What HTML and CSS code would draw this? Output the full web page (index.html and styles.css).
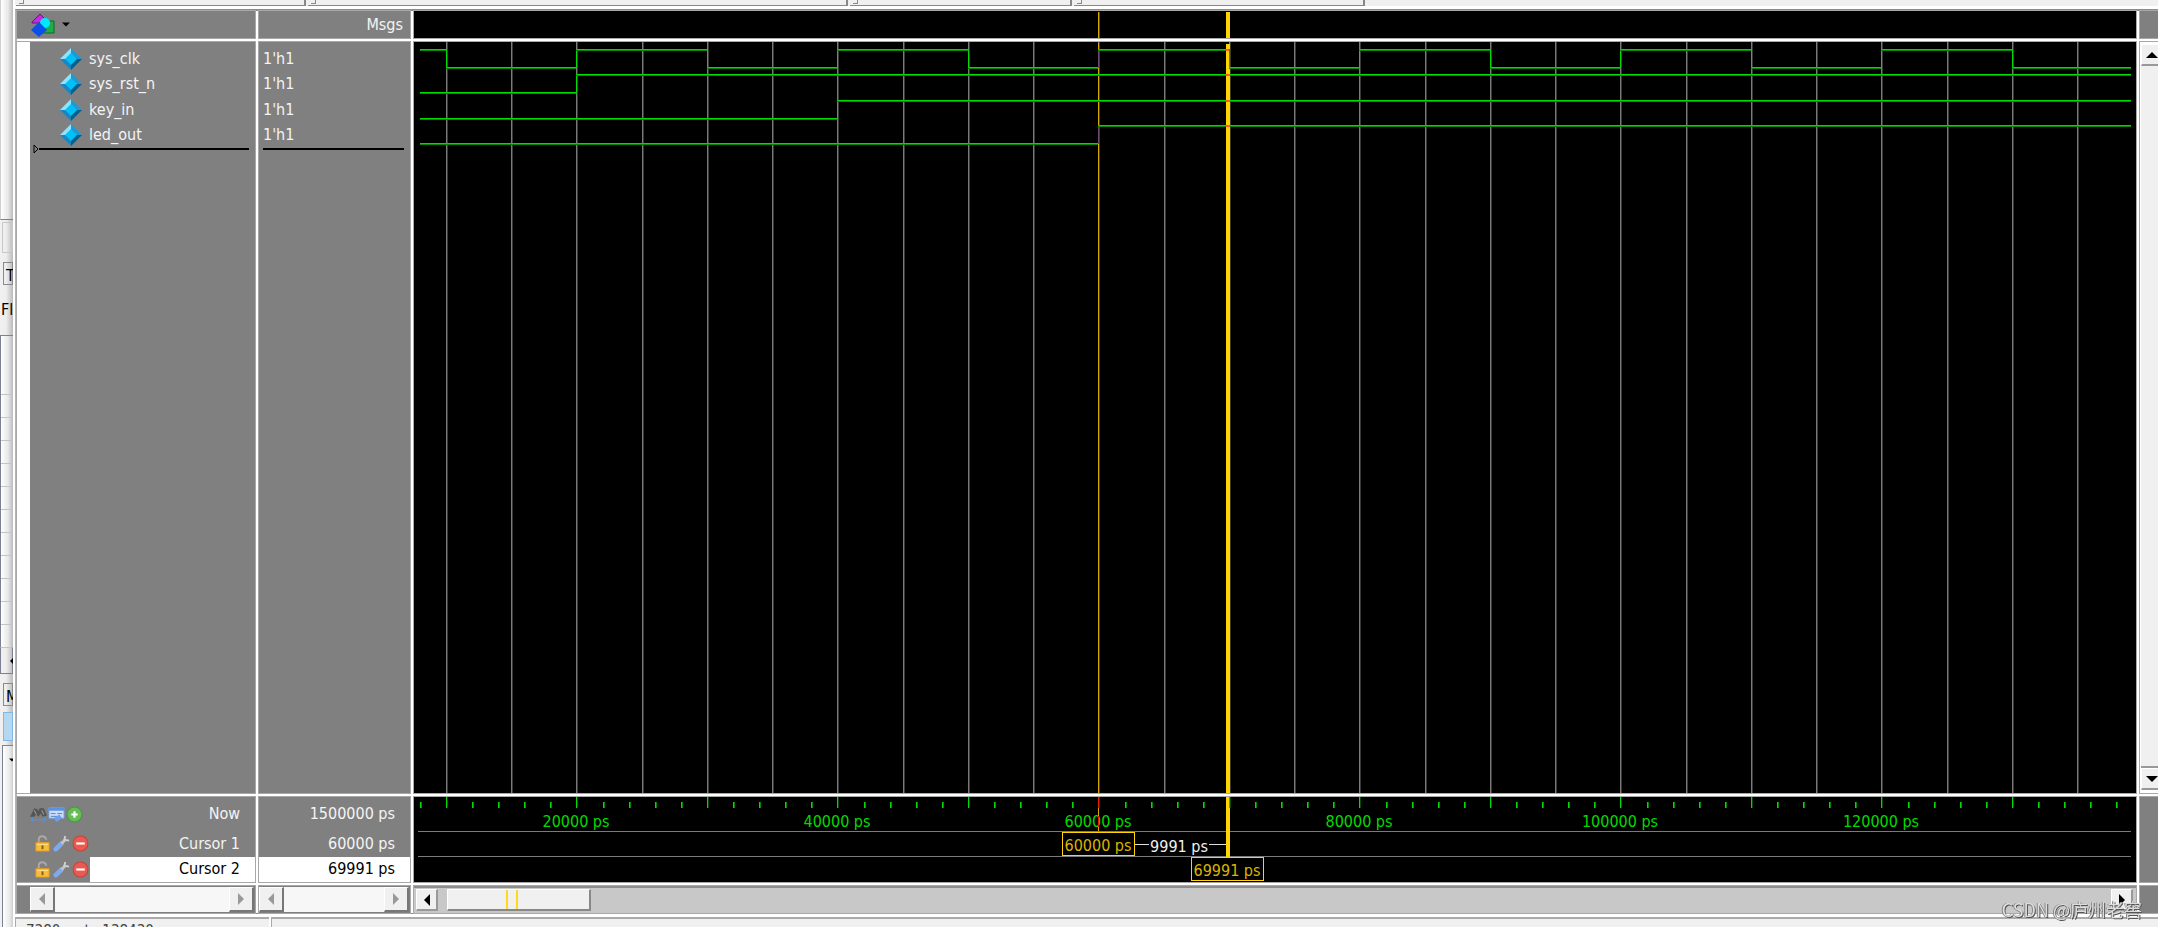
FILE: index.html
```html
<!DOCTYPE html>
<html lang="en">
<head>
  <meta charset="UTF-8">
  <meta name="viewport" content="width=device-width, initial-scale=1.0">
  <title>Wave</title>
  <link rel="stylesheet" href="styles.css">
</head>
<body>
  <!-- icon sprite -->
  <svg class="sprite" aria-hidden="true">
    <symbol id="i-signal" viewBox="0 0 22 22">
      <path d="M11 0L0 11L11 11Z" fill="#8fe3fb"/>
      <path d="M11 0L22 11L11 11Z" fill="#1c9ad6"/>
      <path d="M0 11L11 22L11 11Z" fill="#1686c4"/>
      <path d="M22 11L11 22L11 11Z" fill="#045f8c"/>
      <path d="M11 5L17 11L11 17L5 11Z" fill="#00c0f8"/>
    </symbol>
    <symbol id="i-objects" viewBox="0 0 24 24">
      <path d="M1 9L9 1L14 6V10H1Z" fill="#c42be0" stroke="#6d1080"/>
      <path d="M12 8H23V20H12Z" fill="#1fae45" stroke="#0c6b2a"/>
      <circle cx="14" cy="10" r="5" fill="#00e8ff"/>
      <path d="M8 9L16 17L8 24L0 17Z" fill="#0a50e6"/>
    </symbol>
    <symbol id="i-find" viewBox="0 0 16 16">
      <path d="M0 10L4 2L7 3L8 5L9 2L13 2L16 9L12 10L10 7L8 10L6 8L4 10Z" fill="#555"/>
      <path d="M4 4L6 8M11 4L13 8" stroke="#999" fill="none"/>
      <path d="M1 13H15M3 11L1 13L3 15M13 11L15 13L13 15" stroke="#4b93ea" fill="none"/>
    </symbol>
    <symbol id="i-edit" viewBox="0 0 18 16">
      <path d="M1 1H17V12H1Z" fill="#c9dcf8" stroke="#6f9fe8"/>
      <path d="M1 1H17V4H1Z" fill="#5b90e4"/>
      <path d="M3 7H8M10 7H15M3 10H10" stroke="#5c7fb8"/>
      <path d="M6 12L12 8L15 12L9 16Z" fill="#6f9fe8"/>
    </symbol>
    <symbol id="i-add" viewBox="0 0 16 16">
      <circle cx="8" cy="8" r="7" fill="#67bd55" stroke="#449b3c"/>
      <path d="M8 5V11M5 8H11" stroke="#fff" stroke-width="2"/>
    </symbol>
    <symbol id="i-lock" viewBox="0 0 16 18">
      <path d="M4 8V5C4 0 11 0 12 5" fill="none" stroke="#a9a9a9" stroke-width="2"/>
      <path d="M1 8H15V17H1Z" fill="#f6bd3c" stroke="#dd9a25"/>
      <path d="M2 10H14" stroke="#ffe08a"/>
      <path d="M8 11V15" stroke="#8a5a10" stroke-width="2"/>
    </symbol>
    <symbol id="i-wrench" viewBox="0 0 18 18">
      <path d="M3 15L9 9" stroke="#7fa9ee" stroke-width="5" stroke-linecap="round"/>
      <path d="M9 9L13 5" stroke="#c4c4c4" stroke-width="3"/>
      <path d="M13 1L12 5L17 6" fill="none" stroke="#cfcfcf" stroke-width="2"/>
    </symbol>
    <symbol id="i-remove" viewBox="0 0 16 16">
      <circle cx="8" cy="8" r="7" fill="#ea5a50" stroke="#c94038"/>
      <path d="M4 8H12" stroke="#fff" stroke-width="2"/>
    </symbol>
    <symbol id="i-left" viewBox="0 0 6 12"><path d="M6 0V12L0 6Z" fill="currentColor"/></symbol>
    <symbol id="i-right" viewBox="0 0 6 12"><path d="M0 0V12L6 6Z" fill="currentColor"/></symbol>
    <symbol id="i-up" viewBox="0 0 12 6"><path d="M0 6H12L6 0Z" fill="currentColor"/></symbol>
    <symbol id="i-down" viewBox="0 0 12 6"><path d="M0 0H12L6 6Z" fill="currentColor"/></symbol>
  </svg>

  <div class="app">
    <!-- panels hidden behind the wave window -->
    <aside class="dock">
      <div class="dock-box dock-top"></div>
      <div class="dock-button"></div>
      <div class="dock-field">T</div>
      <div class="dock-label">Fl</div>
      <div class="dock-list"></div>
      <div class="dock-scroll"><svg class="dock-arrow"><use href="#i-left"/></svg></div>
      <div class="dock-field dock-field-m">M</div>
      <div class="dock-selected"></div>
      <div class="dock-box dock-tree"><svg class="dock-arrow"><use href="#i-down"/></svg></div>
    </aside>

    <main class="window">
      <div class="toolbars">
        <div class="toolbar toolbar-a"></div>
        <div class="toolbar toolbar-b"></div>
        <div class="toolbar toolbar-c"></div>
        <div class="toolbar toolbar-d"></div>
      </div>

      <div class="wave">
        <div class="cell head">
          <button class="menu" aria-label="Objects">
            <svg class="menu-icon"><use href="#i-objects"/></svg>
            <svg class="menu-arrow"><use href="#i-down"/></svg>
          </button>
        </div>
        <div class="cell head head-msgs">Msgs</div>
        <div class="cell black"><svg class="plot" id="header"></svg></div>
        <div class="cell head"></div>

        <div class="cell names">
          <ul class="signals">
            <li><svg class="signal-icon"><use href="#i-signal"/></svg>sys_clk</li>
            <li><svg class="signal-icon"><use href="#i-signal"/></svg>sys_rst_n</li>
            <li><svg class="signal-icon"><use href="#i-signal"/></svg>key_in</li>
            <li><svg class="signal-icon"><use href="#i-signal"/></svg>led_out</li>
          </ul>
          <div class="insert"><svg class="insert-mark" viewBox="0 0 6 10"><path d="M1 1V9L5 5Z" fill="none" stroke="#000"/></svg></div>
        </div>
        <div class="cell values">
          <ul class="signals">
            <li>1'h1</li>
            <li>1'h1</li>
            <li>1'h1</li>
            <li>1'h1</li>
          </ul>
          <div class="insert"></div>
        </div>
        <div class="cell black"><svg class="plot" id="traces"></svg></div>
        <div class="cell vscroll">
          <button class="scroll-button" aria-label="Scroll up"><svg class="arrow-v"><use href="#i-up"/></svg></button>
          <div class="vtrack"></div>
          <button class="scroll-button" aria-label="Scroll down"><svg class="arrow-v"><use href="#i-down"/></svg></button>
        </div>

        <div class="cell cursors">
          <div class="cursor-row">
            <div class="tools">
              <button aria-label="Find"><svg><use href="#i-find"/></svg></button>
              <button aria-label="Edit"><svg><use href="#i-edit"/></svg></button>
              <button aria-label="Add cursor"><svg><use href="#i-add"/></svg></button>
            </div>
            <span class="cursor-name">Now</span>
          </div>
          <div class="cursor-row">
            <div class="tools tools-cursor">
              <button aria-label="Lock cursor 1"><svg><use href="#i-lock"/></svg></button>
              <button aria-label="Edit cursor 1"><svg><use href="#i-wrench"/></svg></button>
              <button aria-label="Remove cursor 1"><svg><use href="#i-remove"/></svg></button>
            </div>
            <span class="cursor-name">Cursor 1</span>
          </div>
          <div class="cursor-row">
            <div class="tools tools-cursor">
              <button aria-label="Lock cursor 2"><svg><use href="#i-lock"/></svg></button>
              <button aria-label="Edit cursor 2"><svg><use href="#i-wrench"/></svg></button>
              <button aria-label="Remove cursor 2"><svg><use href="#i-remove"/></svg></button>
            </div>
            <span class="cursor-name active">Cursor 2</span>
          </div>
        </div>
        <div class="cell cursors">
          <div class="cursor-row"><span class="cursor-name">1500000 ps</span></div>
          <div class="cursor-row"><span class="cursor-name">60000 ps</span></div>
          <div class="cursor-row"><span class="cursor-name active">69991 ps</span></div>
        </div>
        <div class="cell black"><svg class="plot" id="ruler"></svg></div>
        <div class="cell head"></div>

        <div class="cell hscroll hscroll-names">
          <button class="scroll-button" aria-label="Scroll names left" disabled><svg class="arrow-h"><use href="#i-left"/></svg></button>
          <div class="htrack"></div>
          <button class="scroll-button" aria-label="Scroll names right" disabled><svg class="arrow-h"><use href="#i-right"/></svg></button>
        </div>
        <div class="cell hscroll">
          <button class="scroll-button" aria-label="Scroll values left" disabled><svg class="arrow-h"><use href="#i-left"/></svg></button>
          <div class="htrack"></div>
          <button class="scroll-button" aria-label="Scroll values right" disabled><svg class="arrow-h"><use href="#i-right"/></svg></button>
        </div>
        <div class="cell hscroll hscroll-wave">
          <button class="scroll-button" aria-label="Scroll wave left"><svg class="arrow-h"><use href="#i-left"/></svg></button>
          <input class="range" type="range" min="0" max="1500" value="9" aria-label="Time">
          <button class="scroll-button" aria-label="Scroll wave right"><svg class="arrow-h"><use href="#i-right"/></svg></button>
        </div>
        <div class="cell head"></div>
      </div>

      <footer class="status">
        <div class="status-range">7380 ps to 138430</div>
        <div class="status-rest"></div>
      </footer>
    </main>
  </div>

  <div class="watermark">CSDN @庐州老窖</div>

  <script src="wave.js"></script>
</body>
</html>
```

FILE: styles.css
```css
* { margin: 0; padding: 0; box-sizing: border-box; }
body {
  background: #f0f0f0; color: #f4f4f4; overflow: hidden;
  font-family: 'DejaVu Sans Condensed', 'Noto Sans', sans-serif; font-size: 16px; line-height: 20px;
}
button { border: none; background: none; color: inherit; font: inherit; }
svg { display: block; }
.sprite { position: absolute; width: 0; height: 0; }

.app { display: flex; height: 100vh; }

/* left dock */
.dock {
  width: 13px; flex: none; overflow: hidden; color: #000; display: flex; flex-direction: column;
  background: linear-gradient(90deg, #f0f0f0 1px, #eee 6px, #bbb 13px);
}
.dock-box, .dock-list { border-left: 1px solid #7c8090; background: linear-gradient(90deg, #fff, #e8e8e8 7px, #bbb 12px); }
.dock-top { height: 220px; border-left-color: #d0d0d0; border-bottom: 1px solid #7c8090; }
.dock-button { height: 31px; margin: 2px 0 0 2px; border: 1px solid #c8c8c8; flex: none; }
.dock-field { height: 23px; margin: 9px 0 0 3px; padding-left: 2px; border: 1px solid #8a8a8a; line-height: 26px; flex: none; }
.dock-label { height: 50px; padding: 15px 0 0 1px; flex: none; }
.dock-list {
  height: 312px; border-top: 1px solid #7c8090;
  background: repeating-linear-gradient(transparent 0 22px, #c4c4c4 22px 23px) 0 36px no-repeat, linear-gradient(90deg, #fff, #e8e8e8 7px, #bbb 12px);
}
.dock-scroll { height: 27px; padding: 9px 0 0 8px; border: 1px solid #7c8090; border-top-color: #c4c4c4; flex: none; }
.dock-arrow { width: 6px; height: 8px; }
.dock-field-m { margin-top: 9px; }
.dock-selected { height: 29px; margin: 6px 0 4px 3px; background: #b5d7f0; border: 1px solid #7cb8e8; flex: none; }
.dock-tree { flex: 1; margin-left: 2px; padding: 10px 0 0 6px; border-top: 1px solid #7c8090; }

/* wave window */
.window { flex: 1; min-width: 0; display: flex; flex-direction: column; background: #fff; border-left: 2px solid #fff; }
.toolbars { height: 7px; display: flex; gap: 2px; background: #f0f0f0; border-bottom: 1px solid #fff; flex: none; padding-left: 1px; }
.toolbar { height: 6px; border-right: 2px solid #888; border-bottom: 1px solid #888; }
.toolbar::before { content: ""; display: block; width: 4px; height: 3px; margin-left: 3px; border-right: 1px solid #888; border-bottom: 1px solid #888; }
.toolbar-a { width: 290px; }
.toolbar-b { width: 540px; }
.toolbar-c { width: 222px; }
.toolbar-d { width: 291px; }

.wave {
  flex: 1; min-height: 0; margin-top: 2px;
  border-top: 2px solid #8c8c8c; border-left: 2px solid #b4b4b4; border-bottom: 1px solid #8c8c8c;
  display: grid; gap: 4px;
  grid-template-columns: 238px 151px 1fr 18px;
  grid-template-rows: 27px 1fr 85px 27px;
}
.cell { background: #808080; box-shadow: 0 0 0 1px #a8a8a8; min-width: 0; min-height: 0; overflow: hidden; }
.black { background: #000; }
.head { display: flex; align-items: center; padding: 0 14px; }
.head-msgs { justify-content: flex-end; padding-right: 7px; }
.menu { display: flex; align-items: center; gap: 7px; }
.menu-icon { width: 24px; height: 24px; }
.menu-arrow { width: 8px; height: 5px; color: #000; }

.names { border-left: 13px solid #fff; padding: 4px 0 0 3px; }
.values { padding: 4px 6px 0 4px; }
.names .insert { margin-right: 6px; }
.signals { list-style: none; display: grid; grid-template-rows: repeat(4, 1fr); height: 102px; }
.signals li { display: flex; align-items: center; gap: 7px; }
.names .signals { padding-left: 27px; }
.signal-icon { width: 22px; height: 22px; }
.insert { position: relative; border-top: 2px solid #000; }
.insert-mark { position: absolute; left: 0; top: -6px; width: 6px; height: 10px; background: #808080; }

.plot { width: 100%; height: 100%; }

.cursors { display: grid; grid-template-rows: 34px 1fr 1fr; }
.cursor-row { display: flex; }
.cursor-name { flex: 1; display: flex; align-items: center; justify-content: flex-end; padding-right: 15px; }
.cursor-name.active { background: #fff; color: #000; }
.tools { width: 73px; padding-left: 13px; display: flex; align-items: center; gap: 1px; flex: none; }
.tools svg { width: 17px; height: 17px; }
.tools-cursor { padding-left: 17px; gap: 2px; }

/* scroll bars */
.scroll-button {
  width: 25px; height: 25px; flex: none; display: flex; align-items: center; justify-content: center;
  background: #f0f0f0; color: #000; border: 1px solid #fff; border-right: 2px solid #777; border-bottom: 2px solid #777;
}
.scroll-button:disabled { color: #999; }
.arrow-h { width: 6px; height: 12px; }
.arrow-v { width: 12px; height: 6px; }
.hscroll { display: flex; padding: 1px 1px 1px 0; }
.hscroll-names { padding-left: 13px; }
.htrack { flex: 1; background: #f7f7f7; }
.hscroll-wave { background: #c8c8c8; padding: 1px 3px 2px 2px; border-top: 2px solid #8c8c8c; }
.hscroll-wave .scroll-button { width: 22px; height: 22px; border-right-color: #999; border-bottom-color: #999; }
.range { flex: 1; min-width: 0; height: 22px; appearance: none; background: none; }
.range::-webkit-slider-thumb {
  appearance: none; width: 144px; height: 22px; border: 1px solid #fff; border-right: 2px solid #888; border-bottom: 2px solid #888;
  background: linear-gradient(90deg, #f0f0f0 58px, #ffd91a 58px 60px, #f0f0f0 60px 68px, #ffd91a 68px 70px, #f0f0f0 70px);
}
.vscroll { display: flex; flex-direction: column; padding: 2px 0 3px 1px; background: #fff; }
.vscroll .scroll-button { width: 22px; height: 22px; border-right-color: #999; border-bottom-color: #999; }
.vtrack { flex: 1; background: #f0f0f0; border-bottom: 2px solid #999; }

.status { height: 10px; margin-top: 3px; display: flex; gap: 2px; color: #444; overflow: hidden; flex: none; font-size: 15px; }
.status-range, .status-rest { background: #f0f0f0; border-top: 2px solid #aaa; border-left: 1px solid #aaa; padding: 2px 10px; }
.status-range { width: 254px; white-space: nowrap; }
.status-rest { flex: 1; }

.watermark {
  position: fixed; right: 16px; bottom: 5px; font-family: 'Noto Sans CJK SC', sans-serif; font-size: 18px; line-height: 26px;
  color: #ddd; text-shadow: 1px 1px 0 #555, -1px 0 0 #888;
}
```

FILE: wave.js
```js
const NS = 'http://www.w3.org/2000/svg';

// visible time range of the wave pane, in ps
const START = 7510;
const SPAN = 131954;
const MARGIN = 5;

const GREEN = '#00dc00';
const DIM_GREEN = '#008a00';
const GRID = '#7a7a7a';
const DIM_GRID = '#3a3a3a';
const YELLOW = '#ffd400';
const DIM_YELLOW = '#d6a800';

const cursors = [60000, 69991];

// level at the start of the view, then the times at which it toggles
const signals = [
  { high: 7, low: 25, level: 1, edges: [10000, 20000, 30000, 40000, 50000, 60000, 70000, 80000, 90000, 100000, 110000, 120000, 130000] },
  { high: 32, low: 50, level: 0, edges: [20000] },
  { high: 58, low: 76, level: 0, edges: [40000] },
  { high: 83, low: 101, level: 0, edges: [60000] }
];

function rect(svg, x, y, w, h, fill) {
  const el = document.createElementNS(NS, 'rect');
  el.setAttribute('x', x);
  el.setAttribute('y', y);
  el.setAttribute('width', w);
  el.setAttribute('height', h);
  el.setAttribute('fill', fill);
  svg.appendChild(el);
}

function text(svg, x, y, fill, value) {
  const el = document.createElementNS(NS, 'text');
  el.setAttribute('x', x);
  el.setAttribute('y', y);
  el.setAttribute('fill', fill);
  el.setAttribute('text-anchor', 'middle');
  el.textContent = value;
  svg.appendChild(el);
}

function frame(svg, x, y, w, h, stroke) {
  rect(svg, x, y, w, h, stroke);
  rect(svg, x + 1, y + 1, w - 2, h - 2, '#000');
}

function draw() {
  const header = document.getElementById('header');
  const traces = document.getElementById('traces');
  const ruler = document.getElementById('ruler');
  [header, traces, ruler].forEach(svg => svg.replaceChildren());

  const width = traces.clientWidth;
  const height = traces.clientHeight;
  const right = width - MARGIN;
  const toX = t => Math.floor((t - START) / SPAN * width);
  const x1 = toX(cursors[0]);
  const x2 = toX(cursors[1]) - 3;

  rect(header, x1, 1, 1, 26, DIM_YELLOW);
  rect(header, x1 + 1, 1, 1, 26, '#5c4800');
  rect(header, x2, 1, 4, 26, YELLOW);

  // grid
  for (let t = 10000; toX(t) < right; t += 5000) {
    rect(traces, toX(t), 0, 1, height, GRID);
    rect(traces, toX(t) + 1, 0, 1, height, DIM_GRID);
  }

  rect(traces, x1, 1, 1, height, DIM_YELLOW);
  rect(traces, x2, 2, 4, height, YELLOW);

  signals.forEach(s => {
    let x = 6;
    let high = s.level;
    s.edges.concat(null).forEach(edge => {
      const end = edge === null ? right : toX(edge);
      const y = high ? s.high : s.low;
      rect(traces, x, y, end - x, 1, GREEN);
      rect(traces, x, y + 1, end - x, 1, DIM_GREEN);
      if (x <= x2 && end > x2) rect(traces, x2, y, 4, 2, '#ff5a1a');
      if (edge !== null) {
        // edges under a cursor change colour
        const color = edge === 60000 ? '#6b4a6b' : edge === 70000 ? '#ff2a00' : GREEN;
        rect(traces, end, s.high, 1, s.low - s.high + 1, color);
      }
      x = end;
      high = !high;
    });
  });

  // time ruler
  for (let t = 8000; toX(t) < right; t += 2000) {
    rect(ruler, toX(t), 5, 1, 6, GREEN);
    rect(ruler, toX(t) + 1, 5, 1, 6, DIM_GREEN);
  }
  for (let t = 10000; toX(t) < right; t += 10000) {
    rect(ruler, toX(t), 0, 1, 11, GREEN);
    rect(ruler, toX(t) + 1, 0, 1, 11, '#004c00');
  }
  for (let t = 20000; t <= 120000; t += 20000) {
    text(ruler, toX(t), 30, GREEN, t + ' ps');
  }
  rect(ruler, 4, 34, right - 4, 1, GRID);
  rect(ruler, 4, 59, right - 4, 1, GRID);

  // cursors and the distance between them
  rect(ruler, x1, 0, 1, 34, DIM_YELLOW);
  rect(ruler, x1, 0, 1, 11, '#e02000');
  rect(ruler, x1, 19, 1, 11, '#e02000');
  rect(ruler, x2, 0, 4, 60, YELLOW);
  rect(ruler, x2 + 3, 0, 1, 11, '#ff4a00');
  frame(ruler, x1 - 36, 35, 73, 24, YELLOW);
  text(ruler, x1, 54, '#dcb400', cursors[0] + ' ps');
  frame(ruler, x2 - 35, 60, 73, 24, YELLOW);
  text(ruler, x2 + 1, 79, '#dcb400', cursors[1] + ' ps');
  rect(ruler, x1 + 37, 47, 14, 1, '#ddd');
  rect(ruler, x2 - 17, 47, 17, 1, '#ddd');
  text(ruler, (x1 + x2) / 2 + 17, 55, '#f0f0f0', cursors[1] - cursors[0] + ' ps');
}

draw();
window.addEventListener('resize', draw);
```
